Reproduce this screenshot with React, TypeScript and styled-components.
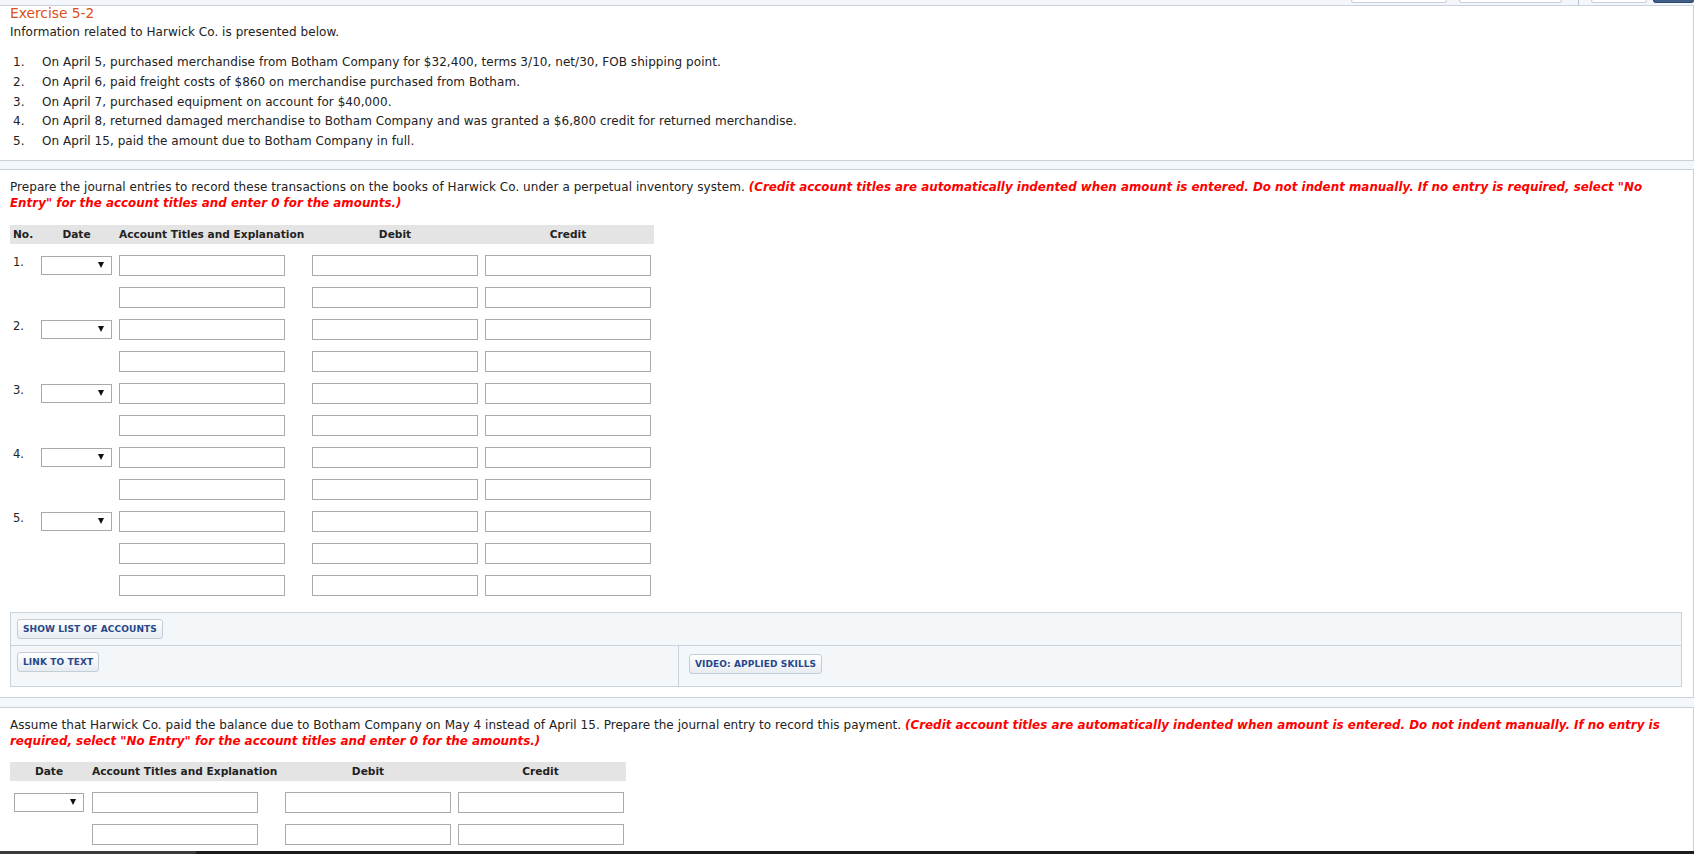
import styled, { createGlobalStyle } from "styled-components";

const GlobalStyle = createGlobalStyle`
  html, body {
    margin: 0;
    padding: 0;
    overflow: hidden;
    background: #f3f6fa;
  }
  body {
    font-family: "DejaVu Sans", Verdana, sans-serif;
    font-size: 12px;
    letter-spacing: 0.05px;
    color: #222;
  }
  * { box-sizing: border-box; }
`;

const TopStrip = styled.div`
  height: 5px;
  display: flex;
  justify-content: flex-end;
  align-items: flex-start;
`;

const Tab = styled.div<{ $w: number; $gap: number; $dark?: boolean }>`
  width: ${(p) => p.$w}px;
  margin-left: ${(p) => p.$gap}px;
  height: 3px;
  background: ${(p) => (p.$dark ? "#3f5d86" : "#ffffff")};
  border: 1px solid ${(p) => (p.$dark ? "#2e4b73" : "#c6d1dc")};
  border-top: 0;
  border-radius: 0 0 3px 3px;
`;

const TabDivider = styled.div<{ $gap: number }>`
  width: 1px;
  height: 5px;
  margin-left: ${(p) => p.$gap}px;
  background: #b8c2cc;
`;

const Panel = styled.section<{ $gap: number; $bottom: number }>`
  width: 1694px;
  margin-top: ${(p) => p.$gap}px;
  background: #ffffff;
  border: 1px solid #c9d1da;
  border-left: 0;
  padding: 0 10px ${(p) => p.$bottom}px 10px;
`;

const Title = styled.h1`
  margin: 0;
  font-size: 13.8px;
  line-height: 15px;
  font-weight: normal;
  letter-spacing: 0;
  color: #dc4f16;
`;

const Lead = styled.p`
  margin: 4px 0 0;
  line-height: 15px;
`;

const List = styled.ol`
  list-style: none;
  margin: 13px 0 0;
  padding: 0;
`;

const Item = styled.li`
  display: flex;
  line-height: 19.75px;
`;

const ItemNo = styled.span`
  width: 32px;
  padding-left: 3px;
  flex-shrink: 0;
`;

const Prompt = styled.p`
  margin: 0;
  padding-top: 9px;
  line-height: 16px;
`;

const Note = styled.em`
  color: #ff0000;
  font-weight: bold;
  font-size: 11.9px;
  letter-spacing: 0;
`;

const HeadRow = styled.div<{ $cols: string; $gap: number }>`
  display: grid;
  grid-template-columns: ${(p) => p.$cols};
  width: max-content;
  height: 19px;
  margin-top: ${(p) => p.$gap}px;
  align-items: center;
  background: #e4e4e4;
  font-size: 10.6px;
  letter-spacing: 0;
  font-weight: bold;
  color: #222;
`;

const HeadCell = styled.div<{ $align?: string; $pad?: string }>`
  text-align: ${(p) => p.$align ?? "left"};
  padding: ${(p) => p.$pad ?? "0"};
  white-space: nowrap;
`;

const Row = styled.div<{ $cols: string }>`
  display: grid;
  grid-template-columns: ${(p) => p.$cols};
  height: 21px;
  margin-top: 11px;
  align-items: center;
`;

const NoCell = styled.div`
  align-self: start;
  padding: 1px 0 0 3px;
  line-height: 13px;
  font-size: 11.5px;
`;

const DateCell = styled.div<{ $pad: number }>`
  padding-left: ${(p) => p.$pad}px;
  display: flex;
  align-items: center;
`;

const SelectBox = styled.div<{ $w: number }>`
  width: ${(p) => p.$w}px;
  height: 19px;
  border: 1px solid #a9a9a9;
  background: #fff;
  display: flex;
  align-items: center;
  justify-content: flex-end;
  padding-right: 7px;
`;

const Caret = styled.span`
  width: 0;
  height: 0;
  border-left: 3px solid transparent;
  border-right: 3px solid transparent;
  border-top: 6px solid #111;
`;

const Field = styled.input`
  display: block;
  width: 166px;
  height: 21px;
  border: 1px solid #ababab;
  background: #fff;
  padding: 0 3px;
  font: inherit;
`;

const ToolBox = styled.div`
  margin: 16px 1px 0 0;
  border: 1px solid #c9d3dd;
  background: #f4f7fa;
`;

const ToolRow = styled.div`
  height: 32px;
  padding: 6px 6px 0;
`;

const ToolSplit = styled.div`
  display: grid;
  grid-template-columns: 667px 1fr;
  height: 41px;
  border-top: 1px solid #c9d3dd;
`;

const ToolCell = styled.div<{ $divider?: boolean; $top: number; $left: number }>`
  padding: ${(p) => p.$top}px 0 0 ${(p) => p.$left}px;
  border-left: ${(p) => (p.$divider ? "1px solid #c9d3dd" : "0")};
`;

const SmallButton = styled.button`
  height: 20px;
  padding: 0 5px;
  border: 1px solid #c3cdd8;
  border-radius: 3px;
  background: linear-gradient(#ffffff, #e7ecf1);
  color: #27478a;
  font-family: "DejaVu Sans", Verdana, sans-serif;
  font-size: 9px;
  font-weight: bold;
  letter-spacing: 0.1px;
  white-space: nowrap;
`;

const BottomBar = styled.div`
  position: fixed;
  left: 0;
  right: 0;
  bottom: 0;
  height: 3px;
  background: #1c1c1c;
  display: flex;
`;

const BarThumb = styled.div`
  width: 196px;
  background: #3a3a3a;
`;

const NOTE_A =
  '(Credit account titles are automatically indented when amount is entered. Do not indent manually. If no entry is required, select "No Entry" for the account titles and enter 0 for the amounts.)';

const facts = [
  "On April 5, purchased merchandise from Botham Company for $32,400, terms 3/10, net/30, FOB shipping point.",
  "On April 6, paid freight costs of $860 on merchandise purchased from Botham.",
  "On April 7, purchased equipment on account for $40,000.",
  "On April 8, returned damaged merchandise to Botham Company and was granted a $6,800 credit for returned merchandise.",
  "On April 15, paid the amount due to Botham Company in full.",
];

type Entry = { no?: number; lines: number };

function Journal({
  entries,
  numbered,
  headGap,
}: {
  entries: Entry[];
  numbered: boolean;
  headGap: number;
}) {
  const cols = numbered
    ? "31px 78px 193px 173px 169px"
    : "82px 193px 173px 168px";
  const datePad = numbered ? 0 : 4;
  const selectW = numbered ? 71 : 70;
  return (
    <div>
      <HeadRow $cols={cols} $gap={headGap}>
        {numbered && <HeadCell $pad="0 0 0 3px">No.</HeadCell>}
        <HeadCell
          $align="center"
          $pad={numbered ? "0 7px 0 0" : "0 8px 0 4px"}
        >
          Date
        </HeadCell>
        <HeadCell>Account Titles and Explanation</HeadCell>
        <HeadCell $align="center" $pad="0 7px 0 0">
          Debit
        </HeadCell>
        <HeadCell $align="center" $pad="0 3px 0 0">
          Credit
        </HeadCell>
      </HeadRow>
      {entries.map((entry, ei) =>
        Array.from({ length: entry.lines }).map((_, li) => (
          <Row key={`${ei}-${li}`} $cols={cols}>
            {numbered && <NoCell>{li === 0 ? `${entry.no}.` : ""}</NoCell>}
            <DateCell $pad={datePad}>
              {li === 0 && (
                <SelectBox $w={selectW}>
                  <Caret />
                </SelectBox>
              )}
            </DateCell>
            <div>
              <Field />
            </div>
            <div>
              <Field />
            </div>
            <div>
              <Field />
            </div>
          </Row>
        ))
      )}
    </div>
  );
}

export default function App() {
  return (
    <>
      <GlobalStyle />
      <TopStrip>
        <Tab $w={96} $gap={0} />
        <Tab $w={103} $gap={12} />
        <TabDivider $gap={16} />
        <Tab $w={56} $gap={12} />
        <Tab $w={41} $gap={6} $dark />
      </TopStrip>

      <Panel $gap={0} $bottom={8}>
        <Title>Exercise 5-2</Title>
        <Lead>Information related to Harwick Co. is presented below.</Lead>
        <List>
          {facts.map((f, i) => (
            <Item key={i}>
              <ItemNo>{i + 1}.</ItemNo>
              <span>{f}</span>
            </Item>
          ))}
        </List>
      </Panel>

      <Panel $gap={8} $bottom={10}>
        <Prompt>
          Prepare the journal entries to record these transactions on the
          books of Harwick Co. under a perpetual inventory system.{" "}
          <Note>{NOTE_A}</Note>
        </Prompt>
        <Journal
          numbered
          headGap={14}
          entries={[
            { no: 1, lines: 2 },
            { no: 2, lines: 2 },
            { no: 3, lines: 2 },
            { no: 4, lines: 2 },
            { no: 5, lines: 3 },
          ]}
        />
        <ToolBox>
          <ToolRow>
            <SmallButton>SHOW LIST OF ACCOUNTS</SmallButton>
          </ToolRow>
          <ToolSplit>
            <ToolCell $top={6} $left={6}>
              <SmallButton>LINK TO TEXT</SmallButton>
            </ToolCell>
            <ToolCell $divider $top={8} $left={10}>
              <SmallButton>VIDEO: APPLIED SKILLS</SmallButton>
            </ToolCell>
          </ToolSplit>
        </ToolBox>
      </Panel>

      <Panel $gap={9} $bottom={20}>
        <Prompt>
          Assume that Harwick Co. paid the balance due to Botham Company on May
          4 instead of April 15. Prepare the journal entry to record this
          payment. <Note>{NOTE_A}</Note>
        </Prompt>
        <Journal numbered={false} headGap={13} entries={[{ lines: 2 }]} />
      </Panel>

      <BottomBar>
        <BarThumb />
      </BottomBar>
    </>
  );
}
